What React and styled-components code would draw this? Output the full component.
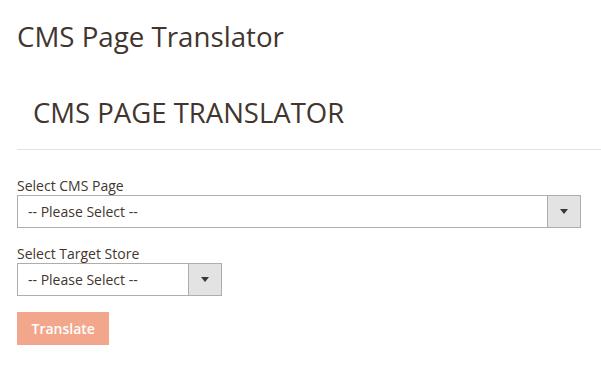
import React from 'react';
import styled, { createGlobalStyle } from 'styled-components';

const Global = createGlobalStyle`
  body {
    margin: 0;
    background: #ffffff;
    font-family: "Open Sans", "Liberation Sans", sans-serif;
    color: #41362f;
  }
`;

const Page = styled.div`
  padding: 18px 0 0 17px;
`;

const PageTitle = styled.h1`
  margin: 0;
  font-size: 27.7px;
  font-weight: 400;
  line-height: 36px;
  color: #41362f;
`;

const Fieldset = styled.div`
  margin-top: 41px;
`;

const Legend = styled.h2`
  margin: 0;
  padding: 0 0 18px 16px;
  font-size: 27.5px;
  font-weight: 400;
  line-height: 36px;
  border-bottom: 1px solid #e3e3e3;
`;

const Form = styled.div`
  padding-top: 28px;
  padding-right: 20px;
  display: flex;
  flex-direction: column;
  gap: 18px;
`;

const Field = styled.div`
  display: flex;
  flex-direction: column;
`;

const Label = styled.label`
  font-size: 14px;
  line-height: 16px;
  margin-bottom: 1px;
`;

const SelectBox = styled.div`
  box-sizing: border-box;
  width: ${p => p.width || '100%'};
  height: 33px;
  border: 1px solid #adadad;
  display: flex;
  background: #fff;
`;

const SelectText = styled.div`
  flex: 1;
  padding-left: 10px;
  font-size: 14px;
  line-height: 31px;
  color: #41362f;
`;

const Arrow = styled.div`
  width: 32px;
  border-left: 1px solid #adadad;
  background: #e3e3e3;
  display: flex;
  align-items: center;
  justify-content: center;
`;

const Button = styled.button`
  align-self: flex-start;
  margin-top: -2px;
  height: 33px;
  padding: 0 14.5px;
  border: none;
  background: #f2a68b;
  color: #fff;
  font-family: "Open Sans", "Liberation Sans", sans-serif;
  font-size: 14px;
  font-weight: 600;
`;

function Select({ width }) {
  return (
    <SelectBox width={width}>
      <SelectText>-- Please Select --</SelectText>
      <Arrow>
        <svg width="8" height="5" viewBox="0 0 8 5">
          <path d="M0 0h8L4 5z" fill="#41362f" />
        </svg>
      </Arrow>
    </SelectBox>
  );
}

export default function App() {
  return (
    <Page>
      <Global />
      <PageTitle>CMS Page Translator</PageTitle>
      <Fieldset>
        <Legend>CMS PAGE TRANSLATOR</Legend>
        <Form>
          <Field>
            <Label>Select CMS Page</Label>
            <Select />
          </Field>
          <Field>
            <Label>Select Target Store</Label>
            <Select width="205px" />
          </Field>
          <Button>Translate</Button>
        </Form>
      </Fieldset>
    </Page>
  );
}
